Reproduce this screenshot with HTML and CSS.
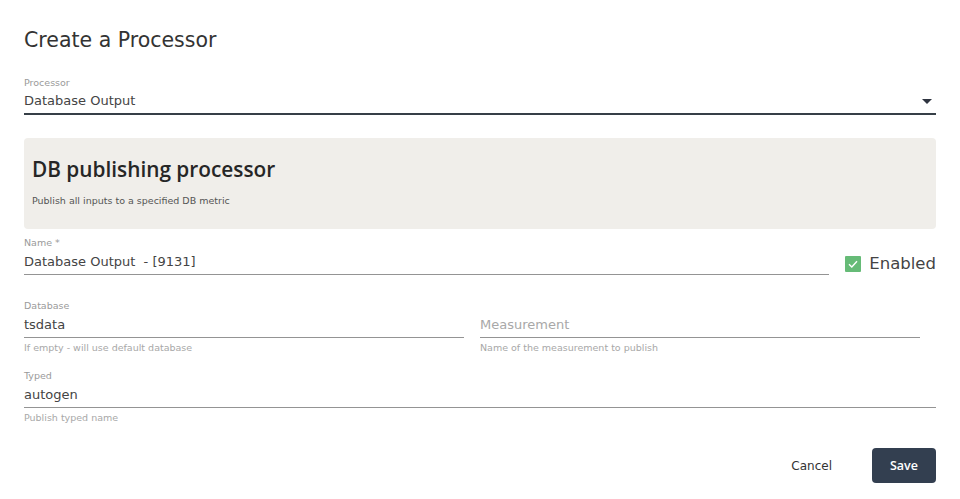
FILE: index.html
```html
<!DOCTYPE html>
<html>
<head>
<meta charset="utf-8">
<link rel="stylesheet" href="styles.css">
</head>
<body>
<div class="dialog">
  <h1 class="title">Create a Processor</h1>

  <div class="field select-field">
    <div class="label">Processor</div>
    <div class="select-row">
      <div class="value">Database Output</div>
      <svg class="caret" width="10" height="5" viewBox="0 0 10 5"><path d="M0 0H10L5 5Z" fill="#2f3440"/></svg>
    </div>
  </div>

  <div class="info-box">
    <div class="info-title">DB publishing processor</div>
    <div class="info-sub">Publish all inputs to a specified DB metric</div>
  </div>

  <div class="name-row">
    <div class="field grow">
      <div class="label">Name *</div>
      <div class="value line">Database Output&nbsp; - [9131]</div>
    </div>
    <label class="check">
      <span class="box"><svg width="16" height="16" viewBox="0 0 16 16"><path d="M4 8.3L6.8 11L12 5.2" fill="none" stroke="#fff" stroke-width="1.4"/></svg></span>
      <span class="check-text">Enabled</span>
    </label>
  </div>

  <div class="two-col">
    <div class="field">
      <div class="label">Database</div>
      <div class="value line">tsdata</div>
      <div class="helper">If empty - will use default database</div>
    </div>
    <div class="field">
      <div class="label">&nbsp;</div>
      <div class="value line placeholder">Measurement</div>
      <div class="helper">Name of the measurement to publish</div>
    </div>
  </div>

  <div class="field typed">
    <div class="label">Typed</div>
    <div class="value line">autogen</div>
    <div class="helper">Publish typed name</div>
  </div>

  <div class="actions">
    <button class="btn-text">Cancel</button>
    <button class="btn-save">Save</button>
  </div>
</div>
</body>
</html>
```
FILE: styles.css
```css
* { box-sizing: border-box; }
html, body { margin: 0; padding: 0; background: #fff; }
body {
  font-family: "DejaVu Sans", "Noto Sans", sans-serif;
  color: #333;
  width: 960px;
  height: 499px;
  overflow: hidden;
}
.dialog {
  padding: 28px 24px 0 24px;
}
.title {
  margin: 0;
  font-size: 20.5px;
  font-weight: 400;
  line-height: 24px;
  color: #333;
}
.label {
  font-size: 9.5px;
  line-height: 12px;
  color: #9a9a9a;
}
.value {
  font-size: 13px;
  line-height: 18px;
  color: #444;
}
.line {
  margin-top: 4px;
  padding-bottom: 3px;
  border-bottom: 1px solid #949494;
}
.placeholder { color: #a8a8a8; }
.helper {
  font-size: 9.5px;
  line-height: 12px;
  margin-top: 4px;
  color: #a8a8a8;
}
.select-field { margin-top: 25px; }
.select-row {
  display: flex;
  align-items: center;
  justify-content: space-between;
  margin-top: 3px;
  padding-bottom: 3px;
  border-bottom: 2px solid #363f47;
}
.caret { margin-right: 4px; }
.info-box {
  margin-top: 23px;
  background: #f0eeea;
  border-radius: 4px;
  padding: 18px 8px 22px 8px;
}
.info-title {
  font-family: "Open Sans", "DejaVu Sans", sans-serif;
  font-size: 20.8px;
  font-weight: 600;
  line-height: 26px;
  color: #262626;
}
.info-sub {
  margin-top: 13px;
  font-size: 9.5px;
  line-height: 12px;
  color: #555;
}
.name-row {
  margin-top: 8px;
  display: flex;
  align-items: flex-end;
  gap: 16px;
}
.grow { flex: 1; }
.check {
  display: flex;
  align-items: center;
  gap: 8px;
  padding-bottom: 1px;
}
.box {
  width: 16px;
  height: 16px;
  background: #66bb77;
  border-radius: 1px;
  display: block;
}
.box svg { display: block; }
.check-text {
  font-size: 16.5px;
  line-height: 20px;
  color: #444;
}
.two-col {
  margin-top: 25px;
  display: grid;
  grid-template-columns: 440px 440px;
  column-gap: 16px;
}
.typed { margin-top: 16px; }
.actions {
  margin-top: 24px;
  display: flex;
  justify-content: flex-end;
  align-items: center;
  gap: 24px;
}
.btn-text {
  border: 0;
  background: none;
  font-family: inherit;
  font-size: 12px;
  color: #333;
  padding: 0 16px;
  height: 35px;
}
.btn-save {
  border: 0;
  background: #333f50;
  color: #fff;
  font-family: "Open Sans", "DejaVu Sans", sans-serif;
  font-size: 12.5px;
  font-weight: 600;
  width: 64px;
  height: 35px;
  border-radius: 4px;
}
```
